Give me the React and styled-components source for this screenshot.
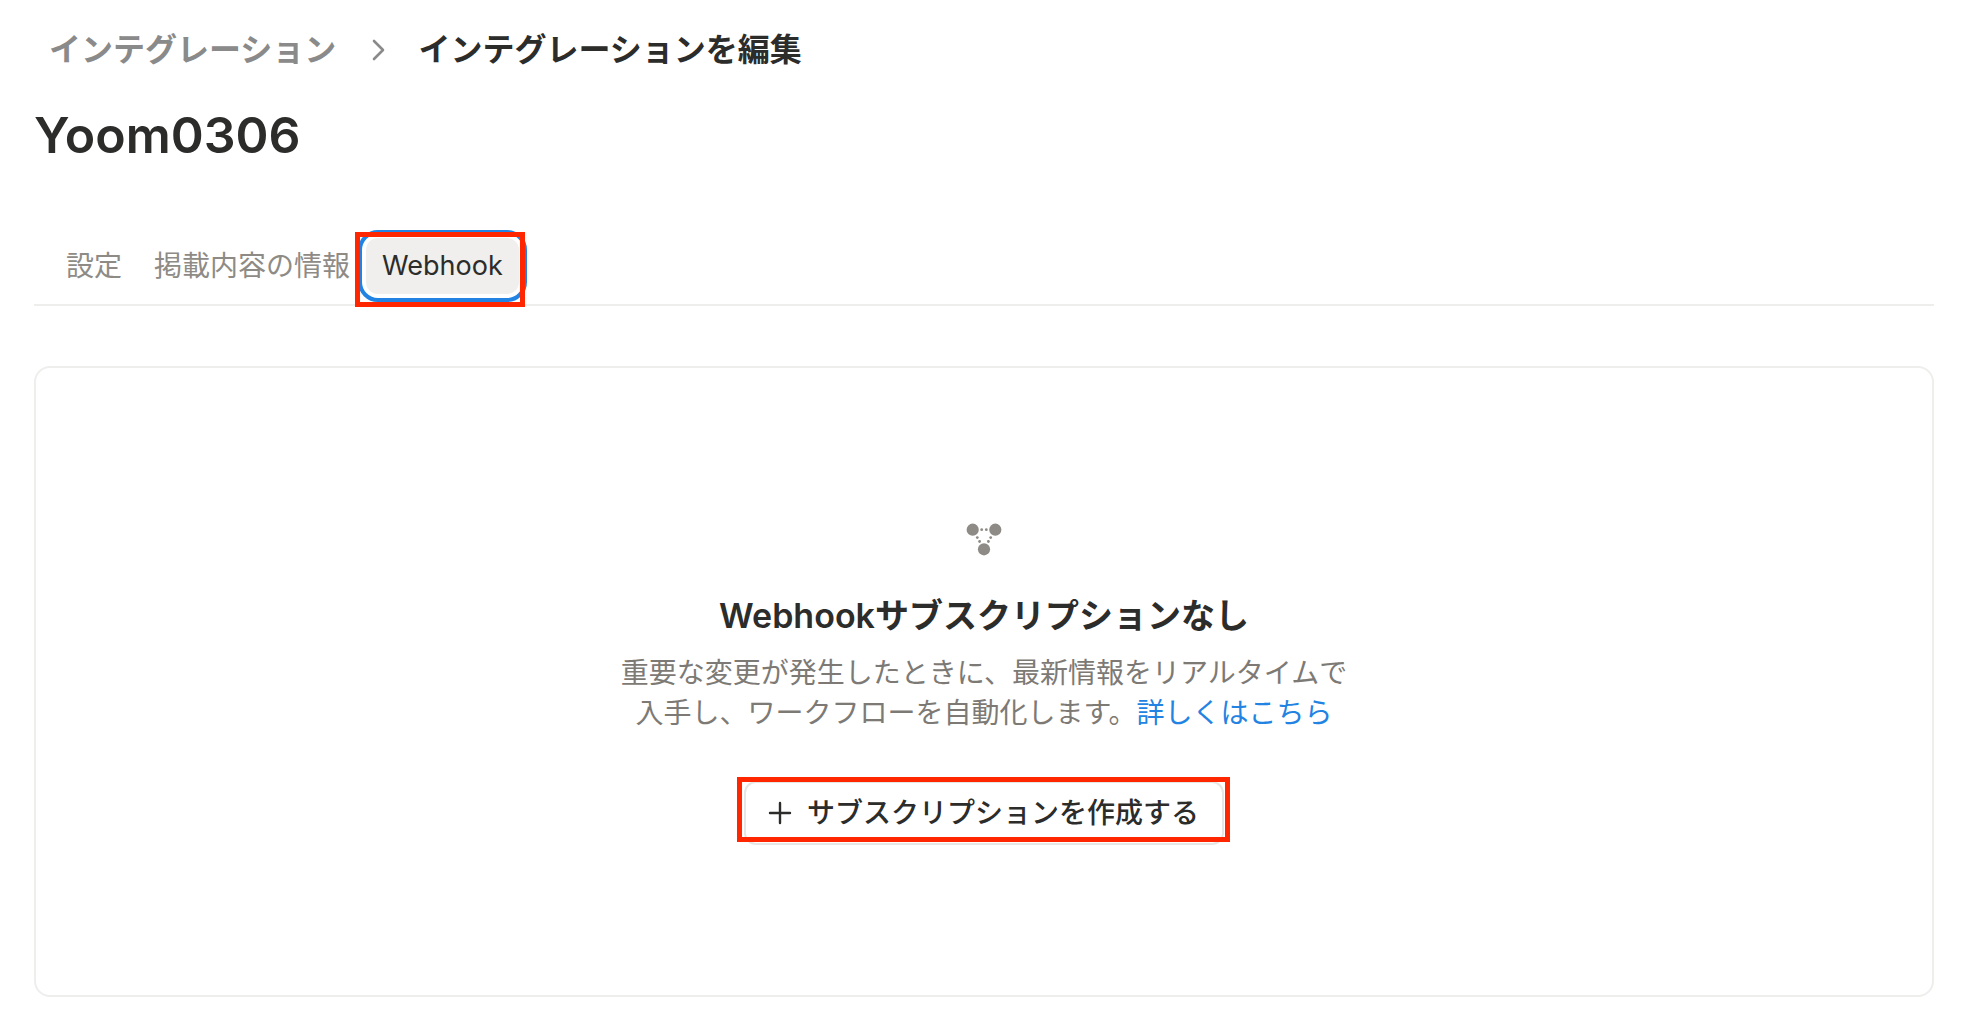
import React from 'react';
import styled, { createGlobalStyle } from 'styled-components';

const TABS = [
  { id: 'settings', label: '設定' },
  { id: 'listing', label: '掲載内容の情報' },
  { id: 'webhook', label: 'Webhook' },
];

const App = () => (
  <>
    <GlobalStyle />
    <Page>
      <Breadcrumb aria-label="breadcrumb">
        <a href="#integrations">インテグレーション</a>
        <Chevron viewBox="0 0 16 24" aria-hidden="true">
          <path d="M3 3l9 9-9 9" />
        </Chevron>
        <span aria-current="page">インテグレーションを編集</span>
      </Breadcrumb>
      <Title>Yoom0306</Title>
      <TabBar role="tablist">
        {TABS.map(({ id, label }) => {
          const active = id === 'webhook';
          return (
            <TabSlot key={id}>
              <Tab type="button" role="tab" aria-selected={active} $active={active}>
                {label}
              </Tab>
              {active && <Marker $inset="-6px -6px -13px -11px" />}
            </TabSlot>
          );
        })}
      </TabBar>
      <EmptyPanel>
        <WebhookIcon />
        <PanelTitle>Webhookサブスクリプションなし</PanelTitle>
        <Description>
          重要な変更が発生したときに、最新情報をリアルタイムで
          <br />
          入手し、ワークフローを自動化します。
          <a href="#learn-more">詳しくはこちら</a>
        </Description>
        <ButtonSlot>
          <CreateButton type="button">
            <PlusIcon viewBox="0 0 24 24" aria-hidden="true">
              <path d="M12 2v20M2 12h20" />
            </PlusIcon>
            サブスクリプションを作成する
          </CreateButton>
          <Marker $inset="-4px -6px 3px -7px" />
        </ButtonSlot>
      </EmptyPanel>
    </Page>
  </>
);

const WebhookIcon = () => (
  <IconSvg viewBox="0 0 48 48" aria-hidden="true">
    <circle cx="12.7" cy="14.7" r="6.1" />
    <circle cx="35.3" cy="14.7" r="6.1" />
    <circle cx="24" cy="34.3" r="6.1" />
    <circle cx="21.7" cy="14.7" r="1.4" />
    <circle cx="26.3" cy="14.7" r="1.4" />
    <circle cx="17.3" cy="22.6" r="1.4" />
    <circle cx="19.6" cy="26.5" r="1.4" />
    <circle cx="30.7" cy="22.6" r="1.4" />
    <circle cx="28.4" cy="26.5" r="1.4" />
  </IconSvg>
);

const GlobalStyle = createGlobalStyle`
  :root {
    --text: #2c2c2b;
    --muted: #8e8b86;
    --blue: #2383e2;
    --line: #eeeeed;
    --marker: #ff2600;
  }
  * {
    box-sizing: border-box;
  }
  body {
    margin: 0;
    background: #fff;
    color: var(--text);
    font-family: Inter, 'Noto Sans CJK JP', sans-serif;
    font-size: 28px;
  }
  a {
    text-decoration: none;
  }
  button {
    font: inherit;
    cursor: pointer;
  }
`;

const Page = styled.main`
  padding: 26px 42px 18px 34px;
`;

const Breadcrumb = styled.nav`
  display: flex;
  align-items: center;
  padding-left: 15px;
  font-size: 32px;
  font-weight: 600;
  line-height: 48px;
  a {
    color: #8a8a8a;
  }
`;

const Chevron = styled.svg`
  width: 16px;
  height: 24px;
  margin: 0 31px 0 35px;
  fill: none;
  stroke: #8a8a8a;
  stroke-width: 2.6;
  stroke-linecap: round;
  stroke-linejoin: round;
`;

const Title = styled.h1`
  margin: 29px 0 0;
  font-size: 50px;
  font-weight: 600;
  line-height: 64px;
`;

const TabBar = styled.div`
  display: flex;
  margin-top: 71px;
  padding: 0 16px 10px;
  border-bottom: 2px solid var(--line);
`;

const TabSlot = styled.div`
  position: relative;
`;

const Tab = styled.button`
  display: block;
  height: 56px;
  padding: 0 16px;
  border: 0;
  border-radius: 12px;
  background: ${({ $active }) => ($active ? '#f0efed' : 'transparent')};
  color: ${({ $active }) => ($active ? 'var(--text)' : 'var(--muted)')};
  outline: ${({ $active }) => ($active ? '4px solid var(--blue)' : 'none')};
  outline-offset: 4px;
  font-size: ${({ $active }) => ($active ? '27px' : '28px')};
  line-height: 40px;
`;

const Marker = styled.span`
  position: absolute;
  inset: ${({ $inset }) => $inset};
  border: 5px solid var(--marker);
  pointer-events: none;
`;

const EmptyPanel = styled.section`
  display: flex;
  flex-direction: column;
  align-items: center;
  margin-top: 60px;
  padding: 147px 24px 150px;
  border: 2px solid var(--line);
  border-radius: 16px;
`;

const IconSvg = styled.svg`
  width: 48px;
  height: 48px;
  fill: var(--muted);
`;

const PanelTitle = styled.h2`
  margin: 29px 0 0;
  font-size: 34px;
  font-weight: 600;
  line-height: 48px;
`;

const Description = styled.p`
  max-width: 740px;
  margin: 13px 0 0;
  color: #7d7a75;
  line-height: 40px;
  text-align: center;
  a {
    color: var(--blue);
  }
`;

const ButtonSlot = styled.div`
  position: relative;
  margin-top: 48px;
`;

const CreateButton = styled.button`
  display: flex;
  align-items: center;
  gap: 15px;
  height: 64px;
  padding: 0 23px 0 22px;
  border: 2px solid #e6e6e5;
  border-radius: 12px;
  background: #fff;
  color: var(--text);
  font-weight: 500;
  line-height: 40px;
`;

const PlusIcon = styled.svg`
  width: 24px;
  height: 24px;
  fill: none;
  stroke: currentColor;
  stroke-width: 2.4;
  stroke-linecap: round;
`;

export default App;
